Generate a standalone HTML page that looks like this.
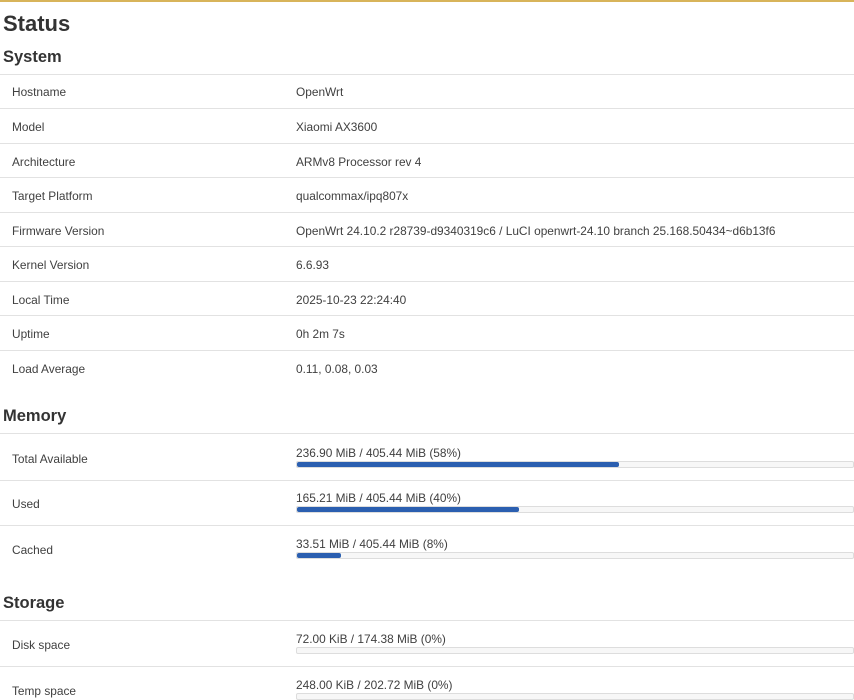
<!DOCTYPE html>
<html><head><style>
body{margin:0;width:854px;height:700px;overflow:hidden;background:#fff;font-family:"Liberation Sans",sans-serif;color:#404040;position:relative}
.top{position:absolute;left:0;top:0;width:854px;height:2px;background:#d8b45a}
h1{position:absolute;left:3px;top:11px;margin:0;font-size:22px;font-weight:bold;color:#333}
h2{position:absolute;left:3px;margin:0;font-size:16.5px;font-weight:bold;color:#333}
.l{position:absolute;left:0;width:854px;height:1px;background:#e2e2e2}
.t{position:absolute;font-size:11.88px;color:#404040;white-space:nowrap}
.bar{position:absolute;left:296px;width:556px;height:5px;border:1px solid #ddd;border-radius:2px;background:#f7f7f7}
.bar div{height:5px;background:#2b5fb0;border-radius:2px}
</style></head><body>
<div class="top"></div>
<h1>Status</h1>
<h2 style="top:48px">System</h2>
<div class="l" style="top:74px"></div>
<div class="t" style="left:12px;top:85px">Hostname</div><div class="t" style="left:296px;top:85px">OpenWrt</div>
<div class="l" style="top:108px"></div>
<div class="t" style="left:12px;top:120px">Model</div><div class="t" style="left:296px;top:120px">Xiaomi AX3600</div>
<div class="l" style="top:143px"></div>
<div class="t" style="left:12px;top:155px">Architecture</div><div class="t" style="left:296px;top:155px">ARMv8 Processor rev 4</div>
<div class="l" style="top:177px"></div>
<div class="t" style="left:12px;top:189px">Target Platform</div><div class="t" style="left:296px;top:189px">qualcommax/ipq807x</div>
<div class="l" style="top:212px"></div>
<div class="t" style="left:12px;top:224px">Firmware Version</div><div class="t" style="left:296px;top:224px">OpenWrt 24.10.2 r28739-d9340319c6 / LuCI openwrt-24.10 branch 25.168.50434~d6b13f6</div>
<div class="l" style="top:246px"></div>
<div class="t" style="left:12px;top:258px">Kernel Version</div><div class="t" style="left:296px;top:258px">6.6.93</div>
<div class="l" style="top:281px"></div>
<div class="t" style="left:12px;top:293px">Local Time</div><div class="t" style="left:296px;top:293px">2025-10-23 22:24:40</div>
<div class="l" style="top:315px"></div>
<div class="t" style="left:12px;top:327px">Uptime</div><div class="t" style="left:296px;top:327px">0h 2m 7s</div>
<div class="l" style="top:350px"></div>
<div class="t" style="left:12px;top:362px">Load Average</div><div class="t" style="left:296px;top:362px">0.11, 0.08, 0.03</div>

<h2 style="top:407px">Memory</h2>
<div class="l" style="top:433px"></div>
<div class="t" style="left:12px;top:452px">Total Available</div><div class="t" style="left:296px;top:446px">236.90 MiB / 405.44 MiB (58%)</div>
<div class="bar" style="top:461px"><div style="width:58%"></div></div>
<div class="l" style="top:480px"></div>
<div class="t" style="left:12px;top:497px">Used</div><div class="t" style="left:296px;top:491px">165.21 MiB / 405.44 MiB (40%)</div>
<div class="bar" style="top:506px"><div style="width:40%"></div></div>
<div class="l" style="top:525px"></div>
<div class="t" style="left:12px;top:543px">Cached</div><div class="t" style="left:296px;top:537px">33.51 MiB / 405.44 MiB (8%)</div>
<div class="bar" style="top:552px"><div style="width:8%"></div></div>

<h2 style="top:594px">Storage</h2>
<div class="l" style="top:620px"></div>
<div class="t" style="left:12px;top:638px">Disk space</div><div class="t" style="left:296px;top:632px">72.00 KiB / 174.38 MiB (0%)</div>
<div class="bar" style="top:647px"><div style="width:0"></div></div>
<div class="l" style="top:666px"></div>
<div class="t" style="left:12px;top:684px">Temp space</div><div class="t" style="left:296px;top:678px">248.00 KiB / 202.72 MiB (0%)</div>
<div class="bar" style="top:693px"><div style="width:0"></div></div>
</body></html>
